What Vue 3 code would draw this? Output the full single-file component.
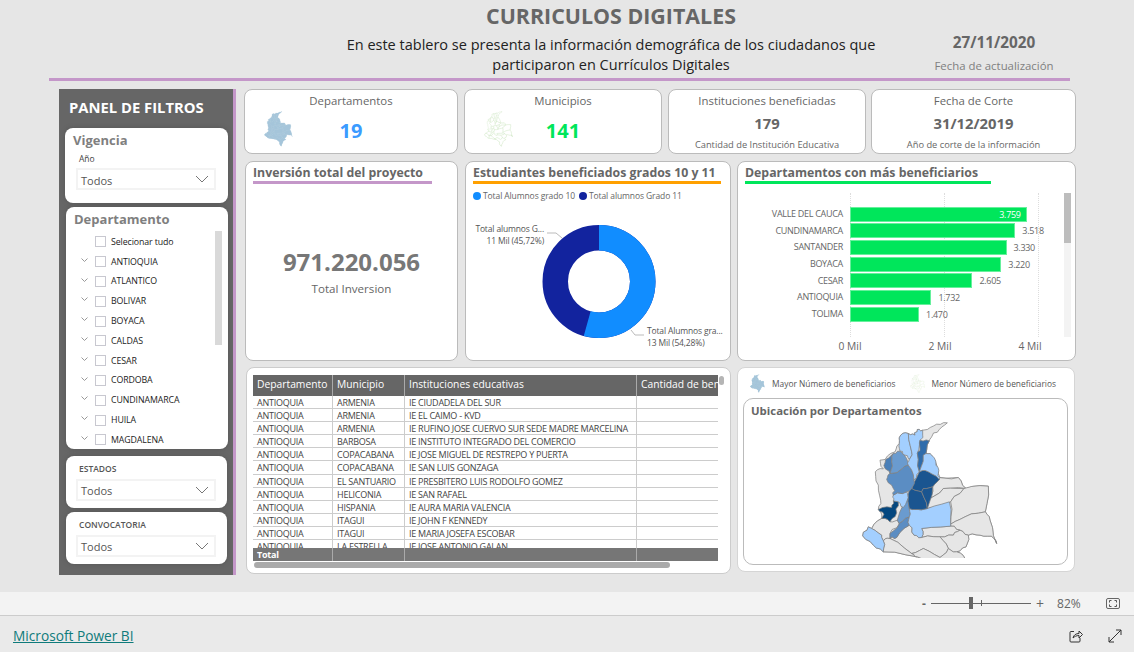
<template>
  <div class="page">
    <div class="report">
      <header class="top">
        <h1>CURRICULOS DIGITALES</h1>
        <div class="top-row">
          <p class="intro">En este tablero se presenta la información demográfica de los ciudadanos que participaron en Currículos Digitales</p>
          <div class="update">
            <strong>27/11/2020</strong>
            <span>Fecha de actualización</span>
          </div>
        </div>
      </header>
      <div class="rule"></div>

      <div class="body">
        <aside class="panel">
          <h2>PANEL DE FILTROS</h2>
          <section class="slicer vigencia">
            <h3>Vigencia</h3>
            <label>Año</label>
            <div class="drop"><span>Todos</span><svg width="14" height="8" viewBox="0 0 14 8"><path d="M1 1l6 6 6-6" fill="none" stroke="#777" /></svg></div>
          </section>
          <section class="slicer depto">
            <h3>Departamento</h3>
            <ul>
              <li v-for="(d, i) in departamentos" :key="d">
                <svg v-if="i" class="chev" width="7" height="4" viewBox="0 0 7 4"><path d="M.5.5l3 3 3-3" fill="none" stroke="#999" /></svg>
                <i class="check"></i>
                <span>{{ d }}</span>
              </li>
            </ul>
            <div class="slicer-scroll"></div>
          </section>
          <section class="slicer small">
            <label>ESTADOS</label>
            <div class="drop"><span>Todos</span><svg width="14" height="8" viewBox="0 0 14 8"><path d="M1 1l6 6 6-6" fill="none" stroke="#777" /></svg></div>
          </section>
          <section class="slicer small">
            <label>CONVOCATORIA</label>
            <div class="drop"><span>Todos</span><svg width="14" height="8" viewBox="0 0 14 8"><path d="M1 1l6 6 6-6" fill="none" stroke="#777" /></svg></div>
          </section>
        </aside>

        <main class="content">
          <div class="row kpis">
            <div class="card kpi">
              <div class="kpi-title">Departamentos</div>
              <div class="kpi-main">
                <svg class="mini" viewBox="60 0 420 520"><polygon v-for="(p, i) in mapa" :key="i" :points="p.pts" fill="#a5c5da" stroke="#bcd5e4" stroke-width="3" /></svg>
                <b class="big blue">19</b>
              </div>
            </div>
            <div class="card kpi">
              <div class="kpi-title">Municipios</div>
              <div class="kpi-main">
                <svg class="mini" viewBox="60 0 420 520"><polygon v-for="(p, i) in mapa" :key="i" :points="p.pts" fill="#fff" stroke="#cbe4bf" stroke-width="5" /></svg>
                <b class="big green">141</b>
              </div>
            </div>
            <div class="card kpi stat">
              <div class="kpi-title">Instituciones beneficiadas</div>
              <b>179</b>
              <small>Cantidad de Institución Educativa</small>
            </div>
            <div class="card kpi stat">
              <div class="kpi-title">Fecha de Corte</div>
              <b>31/12/2019</b>
              <small>Año de corte de la información</small>
            </div>
          </div>

          <div class="row charts">
            <div class="card inv">
              <h4 class="purple">Inversión total del proyecto</h4>
              <div class="inv-num">
                <b>971.220.056</b>
                <span>Total Inversion</span>
              </div>
            </div>
            <div class="card est">
              <h4 class="orange">Estudiantes beneficiados grados 10 y 11</h4>
              <div class="legend">
                <i style="background: #118dff"></i><span>Total Alumnos grado 10</span>
                <i style="background: #12239e"></i><span>Total alumnos Grado 11</span>
              </div>
              <svg class="donut" viewBox="466 204 264 156" width="264" height="156">
                <circle cx="599" cy="281.5" :r="donut.r" fill="none" stroke="#12239e" stroke-width="25.5" />
                <circle cx="599" cy="281.5" :r="donut.r" fill="none" stroke="#118dff" stroke-width="25.5" :stroke-dasharray="donut.dash" transform="rotate(-90 599 281.5)" />
                <path d="M547 233h9l6 5M631 330l4 5h9" fill="none" stroke="#bbb" />
                <text x="544" y="232" text-anchor="end">Total alumnos G...</text>
                <text x="544" y="244" text-anchor="end">11 Mil (45,72%)</text>
                <text x="647" y="334">Total Alumnos gra...</text>
                <text x="647" y="346">13 Mil (54,28%)</text>
              </svg>
            </div>
            <div class="card bene">
              <h4 class="greenline">Departamentos con más beneficiarios</h4>
              <div class="bars">
                <div class="bar-area">
                  <i class="grid-line" v-for="g in [0, 94, 188]" :key="g" :style="{ left: g + 'px' }"></i>
                  <div class="bar-row" v-for="b in barras" :key="b.name">
                    <span class="bar-name">{{ b.name }}</span>
                    <div class="bar" :style="{ width: b.value * 0.047 + 'px' }">
                      <em v-if="b.inside">{{ b.label }}</em>
                    </div>
                    <span v-if="!b.inside" class="bar-val">{{ b.label }}</span>
                  </div>
                </div>
                <div class="axis"><span>0 Mil</span><span>2 Mil</span><span>4 Mil</span></div>
                <div class="bars-scroll"><i></i></div>
              </div>
            </div>
          </div>

          <div class="row bottom">
            <div class="card tabla">
              <div class="t-row t-head">
                <span>Departamento</span><span>Municipio</span><span>Instituciones educativas</span><span>Cantidad de beneficiarios</span>
              </div>
              <div class="t-body">
                <div class="t-row" v-for="(r, i) in filas" :key="i">
                  <span>ANTIOQUIA</span><span>{{ r[0] }}</span><span>{{ r[1] }}</span><span></span>
                </div>
              </div>
              <div class="t-row t-total"><span>Total</span><span></span><span></span><span></span></div>
              <div class="h-scroll"></div>
              <div class="v-scroll"></div>
            </div>
            <div class="card ubic">
              <div class="map-legend">
                <svg viewBox="60 0 420 520" width="15" height="19"><polygon v-for="(p, i) in mapa" :key="i" :points="p.pts" fill="#a5c5da" stroke="#bcd5e4" stroke-width="3" /></svg>
                <span>Mayor Número de beneficiarios</span>
                <svg class="second" viewBox="60 0 420 520" width="15" height="19"><polygon v-for="(p, i) in mapa" :key="i" :points="p.pts" fill="#fff" stroke="#d5e8cc" stroke-width="5" /></svg>
                <span>Menor Número de beneficiarios</span>
              </div>
              <div class="map-box">
                <h5>Ubicación por Departamentos</h5>
                <svg class="map" viewBox="0 0 480 413" width="160" height="138">
                  <polygon v-for="(p, i) in mapa" :key="i" :points="p.pts" :fill="p.c" stroke="#808080" stroke-width="2.200" stroke-linejoin="round" />
                </svg>
              </div>
            </div>
          </div>
        </main>
      </div>
    </div>

    <div class="zoombar">
      <span class="zm">-</span>
      <div class="slider"><i class="thumb"></i><i class="tick"></i></div>
      <span class="zp">+</span>
      <span class="pct">82%</span>
      <svg class="fit" width="14" height="11" viewBox="0 0 14 11"><rect x=".5" y=".5" width="13" height="10" rx="1.5" fill="none" stroke="#666" /><path d="M3.5 4.5v-2h2M10.500 4.500v-2h-2M3.500 6.500v2h2M10.500 6.500v2h-2" fill="none" stroke="#555" /></svg>
    </div>
    <footer class="foot">
      <a href="#">Microsoft Power BI</a>
      <div class="foot-icons">
        <svg width="14" height="14" viewBox="0 0 14 14"><path d="M5 2.500H2a1 1 0 0 0-1 1V12a1 1 0 0 0 1 1h8a1 1 0 0 0 1-1V9" fill="none" stroke="#333" /><path d="M4 9c.5-3 3-4.500 6-4.500V2l3.500 3.500L10 9V6.500C7.500 6.500 5.500 7.500 4 9z" fill="none" stroke="#333" /></svg>
        <svg width="14" height="14" viewBox="0 0 14 14"><path d="M1 13L13 1M8 1h5v5M1 8v5h5" fill="none" stroke="#333" /></svg>
      </div>
    </footer>
  </div>
</template>

<script setup>
const departamentos = ['Selecionar tudo', 'ANTIOQUIA', 'ATLANTICO', 'BOLIVAR', 'BOYACA', 'CALDAS', 'CESAR', 'CORDOBA', 'CUNDINAMARCA', 'HUILA', 'MAGDALENA']

const barras = [
  { name: 'VALLE DEL CAUCA', value: 3759, label: '3.759', inside: true },
  { name: 'CUNDINAMARCA', value: 3518, label: '3.518' },
  { name: 'SANTANDER', value: 3330, label: '3.330' },
  { name: 'BOYACA', value: 3220, label: '3.220' },
  { name: 'CESAR', value: 2605, label: '2.605' },
  { name: 'ANTIOQUIA', value: 1732, label: '1.732' },
  { name: 'TOLIMA', value: 1470, label: '1.470' }
]

const r = 43.75
const len = 2 * Math.PI * r
const donut = { r, dash: `${len * 0.5428} ${len}` }

const filas = [
  ['ARMENIA', 'IE CIUDADELA DEL SUR'],
  ['ARMENIA', 'IE EL CAIMO - KVD'],
  ['ARMENIA', 'IE RUFINO JOSE CUERVO SUR SEDE MADRE MARCELINA'],
  ['BARBOSA', 'IE INSTITUTO INTEGRADO DEL COMERCIO'],
  ['COPACABANA', 'IE JOSE MIGUEL DE RESTREPO Y PUERTA'],
  ['COPACABANA', 'IE SAN LUIS GONZAGA'],
  ['EL SANTUARIO', 'IE PRESBITERO LUIS RODOLFO GOMEZ'],
  ['HELICONIA', 'IE SAN RAFAEL'],
  ['HISPANIA', 'IE AURA MARIA VALENCIA'],
  ['ITAGUI', 'IE JOHN F KENNEDY'],
  ['ITAGUI', 'IE MARIA JOSEFA ESCOBAR'],
  ['LA ESTRELLA', 'IE JOSE ANTONIO GALAN']
]

// rompe cada borde en tramos irregulares; el desvio sale de los extremos para que dos vecinos compartan el mismo borde
const rough = (pts) => {
  const v = pts.split(' ').map((p) => p.split(',').map(Number))
  const out = []
  v.forEach((a, i) => {
    const b = v[(i + 1) % v.length]
    out.push(a.join(','))
    const dist = Math.hypot(b[0] - a[0], b[1] - a[1])
    if (dist < 16) return
    const flip = a[0] > b[0] || (a[0] === b[0] && a[1] > b[1])
    const [lo, hi] = flip ? [b, a] : [a, b]
    const seed = lo[0] * 3 + lo[1] * 5 + hi[0] * 7 + hi[1] * 11
    const nx = -(hi[1] - lo[1]) / dist
    const ny = (hi[0] - lo[0]) / dist
    const mid = [0.33, 0.66].map((t, k) => {
      const off = ((seed * (k + 3)) % 9) - 4
      return [lo[0] + (hi[0] - lo[0]) * t + nx * off, lo[1] + (hi[1] - lo[1]) * t + ny * off]
    })
    if (flip) mid.reverse()
    mid.forEach((m) => out.push(m.map((n) => n.toFixed(1)).join(',')))
  })
  return out.join(' ')
}

// departamentos a mano, en coordenadas del zoom del mapa
const gris = '#e6e6e6'
const claro = '#a3cfff'
const medio = '#6a9bcf'
const medio2 = '#5b8dc3'
const medio3 = '#4a7fb8'
const oscuro = '#2f6cab'
const fuerte = '#1a5590'
const navy = '#04477f'
const mapa = [
  // silueta completa
  { c: gris, pts: '322,8 298,28 276,48 268,62 258,100 275,105 295,160 300,172 355,172 378,205 445,198 436,275 450,300 470,370 455,348 420,345 385,345 378,380 350,395 375,415 335,440 312,510 292,490 285,445 232,410 130,395 100,375 68,347 85,320 95,325 125,295 115,268 122,240 115,195 106,155 130,146 120,120 135,118 165,95 178,70 182,45 205,40 225,45 232,28 248,30 262,28 290,12' },
  { c: gris, pts: '295,172 355,172 378,205 310,205 270,235 278,200 298,178' },
  { c: gris, pts: '270,235 310,205 372,205 332,245 262,265' },
  { c: gris, pts: '332,245 372,205 445,198 436,275 375,290 332,312' },
  { c: gris, pts: '332,318 332,312 375,290 436,275 450,300 470,370 455,348 420,345 385,345 360,330' },
  { c: gris, pts: '245,325 332,318 360,330 340,345 300,350 245,352' },
  { c: gris, pts: '300,350 340,345 360,330 385,345 378,380 350,395 325,385' },
  { c: gris, pts: '170,352 208,315 222,345 245,352 300,350 325,385 300,412 250,385 215,400 150,355' },
  { c: gris, pts: '130,362 150,355 215,400 232,410 130,395' },
  { c: gris, pts: '232,410 215,400 250,385 300,412 325,385 350,395 375,415 335,440 312,510 292,490 285,445' },
  { c: gris, pts: '125,295 150,305 172,300 178,312 150,340 150,355 130,362 125,345 95,325' },
  { c: claro, pts: '68,347 85,320 95,325 125,345 130,362 130,395 100,375' },
  { c: medio2, pts: '178,310 208,290 208,315 170,352 150,355 150,340' },
  { c: medio, pts: '172,300 205,232 208,265 208,290 178,310' },
  { c: navy, pts: '115,268 155,262 160,242 175,245 170,278 150,305 125,295 132,282' },
  { c: claro, pts: '160,225 200,215 205,232 190,262 175,245 160,242' },
  { c: claro, pts: '208,290 208,265 235,268 262,265 328,245 332,318 245,325 245,352 222,345 208,315' },
  { c: fuerte, pts: '215,205 238,155 265,155 298,178 278,200 250,205 245,215' },
  { c: fuerte, pts: '215,205 245,215 262,265 235,268 208,265 205,232' },
  { c: fuerte, pts: '245,215 250,205 278,200 262,265' },
  { c: medio2, pts: '140,178 150,160 180,150 205,135 222,180 215,205 200,215 160,225 160,205' },
  { c: medio3, pts: '137,118 160,100 155,125 150,160 135,145' },
  { c: medio, pts: '160,100 180,93 205,130 205,135 180,150 150,160 155,125' },
  { c: claro, pts: '178,70 182,45 205,40 215,95 208,118 195,105 180,93' },
  { c: claro, pts: '205,40 225,45 232,28 248,30 248,45 240,60 232,100 238,155 222,180 205,135 208,118 215,95' },
  { c: oscuro, pts: '240,60 268,62 258,100 250,105 238,155 232,100 240,85' },
  { c: claro, pts: '258,100 275,105 288,135 295,160 298,178 265,155 238,155 250,105' }
].map((d) => ({ c: d.c, pts: rough(d.pts) }))
</script>

<style>
html, body { margin: 0; background: #eaeaea; }
</style>

<style scoped>
.page {
  width: 1134px;
  height: 652px;
  display: flex;
  flex-direction: column;
  overflow: hidden;
  font-family: "Open Sans", "Noto Sans", sans-serif;
  color: #666;
}
.report { height: 592px; background: #e6e6e6; flex: none; }

.top { height: 78px; box-sizing: border-box; padding-top: 2px; }
h1 {
  margin: 0;
  width: 1222px;
  text-align: center;
  font-size: 21.400px;
  line-height: 28px;
  font-weight: 700;
  color: #666;
}
.top-row { display: flex; margin-top: 5px; }
.intro {
  margin: 0 0 0 340px;
  width: 542px;
  text-align: center;
  font-size: 14.500px;
  line-height: 20px;
  color: #222;
}
.update {
  margin: -3px 0 0 52px;
  width: 120px;
  text-align: center;
  display: flex;
  flex-direction: column;
  align-items: center;
}
.update strong { font-size: 15.300px; line-height: 20px; white-space: nowrap; }
.update span { font-size: 11.400px; line-height: 16px; margin-top: 6px; color: #7f7f7f; white-space: nowrap; }
.rule { height: 3px; width: 1021px; margin-left: 49px; background: #c497c9; }

.body { display: flex; margin-top: 8px; padding-left: 59px; }

.panel {
  width: 177px;
  height: 486px;
  box-sizing: border-box;
  flex: none;
  background: #666;
  border-right: 3px solid #c497c9;
  padding: 0 5px 0 6px;
}
.panel h2 {
  margin: 0;
  padding: 8px 0 0 4px;
  height: 39px;
  box-sizing: border-box;
  font-size: 14.800px;
  line-height: 20px;
  font-weight: 700;
  color: #fff;
  white-space: nowrap;
}
.slicer {
  background: #fff;
  border-radius: 8px;
  box-sizing: border-box;
  box-shadow: 0 0 4px #555;
  position: relative;
}
.slicer h3 { margin: 0; font-size: 13px; line-height: 18px; font-weight: 700; color: #7f7f7f; }
.slicer label { display: block; font-size: 8.500px; line-height: 12px; color: #444; }
.vigencia { height: 75px; padding: 3px 12px 0 11px; }
.vigencia h3 { margin-left: -3px; }
.vigencia label { margin: 4px 0 3px 3px; }
.vigencia .drop span { padding-top: 2px; }
.drop {
  height: 22px;
  box-sizing: border-box;
  border: 2px solid #f3f3f3;
  display: flex;
  align-items: center;
  justify-content: space-between;
  padding: 0 5px 0 3px;
  font-size: 11px;
  color: #555;
}
.depto { height: 242px; margin: 4px 0 0 1px; padding: 3px 0 0 8px; overflow: hidden; }
.depto ul { list-style: none; margin: 4px 0 0; padding: 0; }
.depto li {
  height: 19.800px;
  display: flex;
  align-items: center;
  position: relative;
  padding-left: 21px;
  font-size: 8.800px;
  letter-spacing: -0.1px;
  color: #222;
  white-space: nowrap;
}
.chev { position: absolute; left: 7px; top: 6px; }
.check { width: 9px; height: 9px; border: 1px solid #c8c8d0; margin-right: 5px; flex: none; }
.slicer-scroll { position: absolute; left: 149px; top: 24px; width: 7px; height: 114px; background: #d9d9d9; }
.small { height: 52px; margin: 7px 1px 0 1px; padding: 7px 11px 0 10px; }
.small + .small { margin-top: 4px; }
.small label { font-size: 8.500px; font-weight: 600; margin: 0 3px 4px; color: #555; }

.content { margin-left: 8px; width: 833px; }
.row { display: grid; }
.card { background: #fff; border: 1px solid #bbb; border-radius: 8px; box-sizing: border-box; }
.kpis { grid-template-columns: 214px 198px 198px 204px; column-gap: 6px; height: 65px; }
.kpis .card:last-child { margin-left: -1px; }
.kpi { text-align: center; }
.kpi-title { font-size: 11.400px; line-height: 16px; margin-top: 3px; color: #666; }
.kpi-main { display: flex; align-items: center; position: relative; height: 38px; }
.mini { width: 29px; height: 36px; margin: 2px 0 0 19px; flex: none; }
.big { font-size: 20px; line-height: 26px; position: absolute; left: 0; right: 0; top: 9px; }
.blue { color: #3b9bff; }
.green { color: #00e65b; }
.stat { display: flex; flex-direction: column; align-items: center; }
.stat b { font-size: 14.800px; line-height: 20px; margin-top: 4px; }
.stat small { font-size: 9.300px; line-height: 13px; margin-top: 5px; color: #666; white-space: nowrap; }

.charts { grid-template-columns: 213px 266px 338px; column-gap: 7px; height: 200px; margin: 7px 0 0 1px; }
.charts .card:last-child { margin-left: -1px; }
.card h4 {
  display: block;
  box-sizing: border-box;
  margin: 3px 0 0 7px;
  padding-bottom: 1px;
  border-bottom: 3px solid;
  font-size: 12.300px;
  line-height: 15px;
  font-weight: 700;
  color: #666;
  white-space: nowrap;
}
.card h4.purple { border-color: #c497c9; width: 179px; }
.card h4.orange { border-color: #ffa000; width: 248px; }
.card h4.greenline { border-color: #00e65b; width: 246px; }
.inv-num { display: flex; flex-direction: column; align-items: center; margin-top: 61px; }
.inv-num b { font-size: 24px; line-height: 34px; color: #777; }
.inv-num span { font-size: 11.600px; line-height: 20px; }

.legend { display: flex; align-items: center; margin: 6px 0 0 7px; font-size: 8.500px; letter-spacing: -0.1px; line-height: 12px; color: #666; }
.legend i { width: 8px; height: 8px; border-radius: 50%; margin-right: 2px; }
.legend span { margin-right: 4px; }
.donut { display: block; margin-top: 2px; }
.donut text { font-size: 8.500px; letter-spacing: -0.15px; fill: #555; font-family: "Open Sans", "Noto Sans", sans-serif; }

.bars { position: relative; padding: 9px 0 0 112px; }
.bar-area { position: relative; height: 144px; padding-top: 13px; box-sizing: border-box; }
.grid-line { position: absolute; top: 0; bottom: 0; width: 0; border-left: 1px dotted #ddd; }
.bar-row { position: relative; height: 16.670px; display: flex; align-items: center; font-size: 9px; letter-spacing: -0.3px; color: #666; }
.bar-name { position: absolute; right: 100%; margin-right: 7px; white-space: nowrap; top: 0; line-height: 15px; }
.bar {
  height: 15px;
  box-sizing: border-box;
  background: #00e65b;
  border: 1px solid #66f09c;
  display: flex;
  justify-content: flex-end;
  align-items: center;
  flex: none;
}
.bar em { font-style: normal; color: #fff; padding-right: 5px; }
.bar-val { margin-left: 7px; }
.axis { display: flex; margin: 1px 0 0 -45px; font-size: 10.300px; line-height: 16px; color: #666; }
.axis span { width: 94px; text-align: center; }
.bars-scroll { position: absolute; right: 4px; top: 9px; width: 7px; height: 144px; background: #f3f3f3; }
.bars-scroll i { display: block; height: 50px; background: #bdbdbd; }

.bottom { grid-template-columns: 485px 338px; column-gap: 6px; height: 207px; margin: 6px 0 0 2px; }
.tabla { position: relative; padding: 7px 12px 0 6px; overflow: hidden; border-color: #ccc; }
.t-row {
  display: grid;
  grid-template-columns: 80px 72px 232px 81px;
  font-size: 9px;
  letter-spacing: -0.25px;
  line-height: 13px;
  height: 13.100px;
  box-sizing: border-box;
  border-bottom: 1px solid #ccc;
  color: #444;
  white-space: nowrap;
}
.t-row span { padding-left: 4px; border-right: 1px solid #ccc; overflow: hidden; }
.t-row span:last-child { border-right: 0; }
.t-head { height: 21px; background: #666; border: 0; color: #fff; font-size: 10.300px; letter-spacing: 0; line-height: 18px; }
.t-head span { border-right: 1px solid #aaa; }
.t-body { height: 152px; overflow: hidden; }
.t-total { background: #767676; color: #fff; font-weight: 700; border: 0; }
.t-total span { border-right: 1px solid #aaa; }
.h-scroll { position: absolute; left: 7px; top: 194px; width: 416px; height: 6px; border-radius: 3px; background: #aaa; }
.v-scroll { position: absolute; left: 472px; top: 8px; width: 5px; height: 9px; border-radius: 3px; background: #b5b5b5; }

.ubic { padding: 0 6px 0 5px; border-color: #d5d5d5; height: 205px; }
.map-legend { display: flex; align-items: center; height: 30px; padding-left: 7px; font-size: 8.400px; color: #555; white-space: nowrap; }
.map-legend span { margin-left: 7px; }
.map-legend .second { margin-left: 14px; }
.map-box { height: 167px; border: 1px solid #bbb; border-radius: 10px; box-sizing: border-box; }
h5 { margin: 0; padding: 3px 0 0 7px; font-size: 11.400px; line-height: 18px; font-weight: 700; color: #666; }
.map { display: block; margin: 0 0 0 96px; }

.zoombar {
  height: 24px;
  box-sizing: border-box;
  background: #f3f3f3;
  border-bottom: 1px solid #ccc;
  display: flex;
  align-items: center;
  padding-left: 922px;
  font-size: 12px;
  color: #666;
}
.zm { width: 9px; font-weight: 700; }
.slider { position: relative; width: 100px; height: 1px; background: #666; }
.thumb { position: absolute; left: 38px; top: -6px; width: 4px; height: 12px; background: #666; }
.tick { position: absolute; left: 50px; top: -3px; width: 1px; height: 6px; background: #666; }
.zp { margin-left: 5px; font-size: 14px; }
.pct { margin-left: 13px; font-size: 12px; }
.fit { margin-left: 25px; }
.foot {
  flex: 1;
  background: #eaeaea;
  display: flex;
  align-items: center;
  justify-content: space-between;
  padding: 3px 12px 0 13px;
}
.foot a { color: #0f7b7b; font-size: 13.700px; text-decoration: underline; }
.foot-icons { display: flex; gap: 25px; }
</style>
